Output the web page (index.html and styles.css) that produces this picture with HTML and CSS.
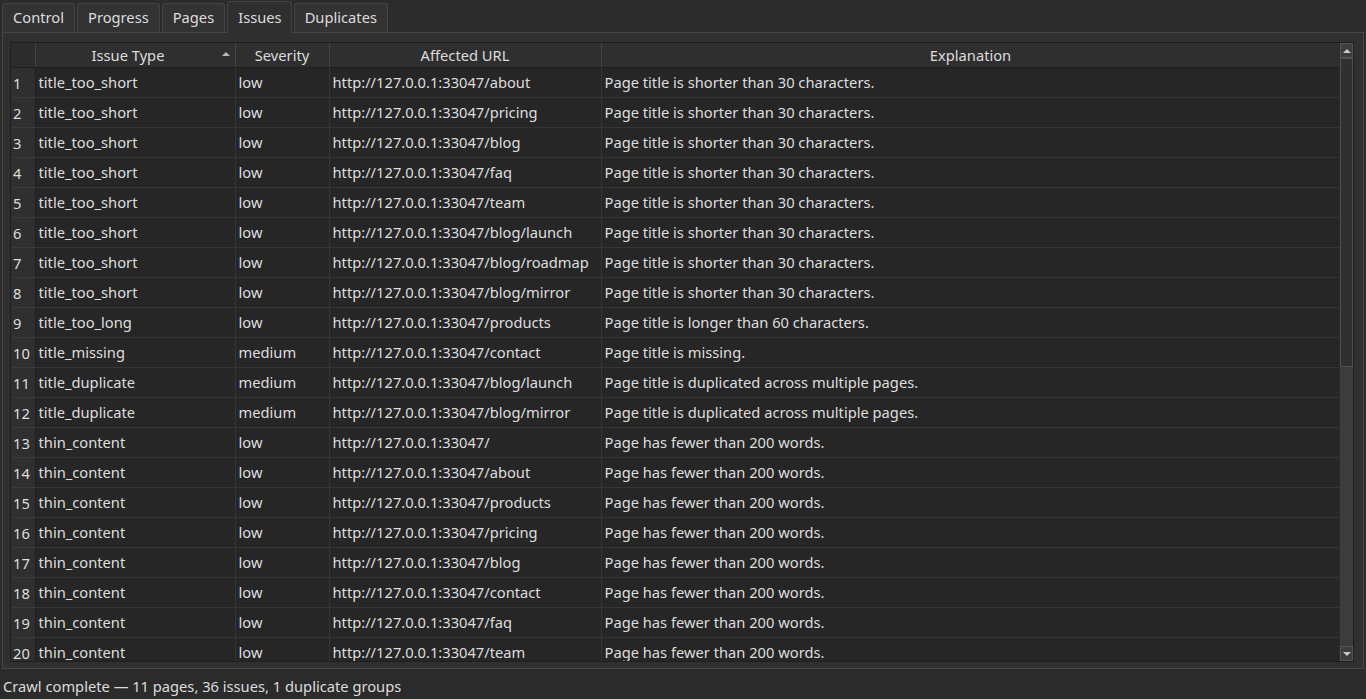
FILE: index.html
```html
<!DOCTYPE html>
<html lang="en">
<head>
  <meta charset="UTF-8">
  <meta name="viewport" content="width=device-width, initial-scale=1.0">
  <link rel="stylesheet" href="styles.css">
</head>
<body>
  <div class="window">
    <!-- Abas -->
    <div class="tabs">
      <div class="tab">Control</div>
      <div class="tab">Progress</div>
      <div class="tab">Pages</div>
      <div class="tab active">Issues</div>
      <div class="tab">Duplicates</div>
    </div>

    <div class="pane">
      <div class="view">
        <div class="table-wrap">
          <table class="grid">
            <colgroup>
              <col class="c-num">
              <col class="c-type">
              <col class="c-sev">
              <col class="c-url">
              <col class="c-exp">
            </colgroup>
            <thead>
              <tr>
                <th class="corner"></th>
                <th class="sorted">Issue Type<span class="sort-arrow"></span></th>
                <th>Severity</th>
                <th>Affected URL</th>
                <th>Explanation</th>
              </tr>
            </thead>
            <tbody>
              <tr><td class="num">1</td><td>title_too_short</td><td>low</td><td>http://127.0.0.1:33047/about</td><td>Page title is shorter than 30 characters.</td></tr>
              <tr><td class="num">2</td><td>title_too_short</td><td>low</td><td>http://127.0.0.1:33047/pricing</td><td>Page title is shorter than 30 characters.</td></tr>
              <tr><td class="num">3</td><td>title_too_short</td><td>low</td><td>http://127.0.0.1:33047/blog</td><td>Page title is shorter than 30 characters.</td></tr>
              <tr><td class="num">4</td><td>title_too_short</td><td>low</td><td>http://127.0.0.1:33047/faq</td><td>Page title is shorter than 30 characters.</td></tr>
              <tr><td class="num">5</td><td>title_too_short</td><td>low</td><td>http://127.0.0.1:33047/team</td><td>Page title is shorter than 30 characters.</td></tr>
              <tr><td class="num">6</td><td>title_too_short</td><td>low</td><td>http://127.0.0.1:33047/blog/launch</td><td>Page title is shorter than 30 characters.</td></tr>
              <tr><td class="num">7</td><td>title_too_short</td><td>low</td><td>http://127.0.0.1:33047/blog/roadmap</td><td>Page title is shorter than 30 characters.</td></tr>
              <tr><td class="num">8</td><td>title_too_short</td><td>low</td><td>http://127.0.0.1:33047/blog/mirror</td><td>Page title is shorter than 30 characters.</td></tr>
              <tr><td class="num">9</td><td>title_too_long</td><td>low</td><td>http://127.0.0.1:33047/products</td><td>Page title is longer than 60 characters.</td></tr>
              <tr><td class="num">10</td><td>title_missing</td><td>medium</td><td>http://127.0.0.1:33047/contact</td><td>Page title is missing.</td></tr>
              <tr><td class="num">11</td><td>title_duplicate</td><td>medium</td><td>http://127.0.0.1:33047/blog/launch</td><td>Page title is duplicated across multiple pages.</td></tr>
              <tr><td class="num">12</td><td>title_duplicate</td><td>medium</td><td>http://127.0.0.1:33047/blog/mirror</td><td>Page title is duplicated across multiple pages.</td></tr>
              <tr><td class="num">13</td><td>thin_content</td><td>low</td><td>http://127.0.0.1:33047/</td><td>Page has fewer than 200 words.</td></tr>
              <tr><td class="num">14</td><td>thin_content</td><td>low</td><td>http://127.0.0.1:33047/about</td><td>Page has fewer than 200 words.</td></tr>
              <tr><td class="num">15</td><td>thin_content</td><td>low</td><td>http://127.0.0.1:33047/products</td><td>Page has fewer than 200 words.</td></tr>
              <tr><td class="num">16</td><td>thin_content</td><td>low</td><td>http://127.0.0.1:33047/pricing</td><td>Page has fewer than 200 words.</td></tr>
              <tr><td class="num">17</td><td>thin_content</td><td>low</td><td>http://127.0.0.1:33047/blog</td><td>Page has fewer than 200 words.</td></tr>
              <tr><td class="num">18</td><td>thin_content</td><td>low</td><td>http://127.0.0.1:33047/contact</td><td>Page has fewer than 200 words.</td></tr>
              <tr><td class="num">19</td><td>thin_content</td><td>low</td><td>http://127.0.0.1:33047/faq</td><td>Page has fewer than 200 words.</td></tr>
              <tr><td class="num">20</td><td>thin_content</td><td>low</td><td>http://127.0.0.1:33047/team</td><td>Page has fewer than 200 words.</td></tr>
            </tbody>
          </table>
        </div>

        <!-- Barra de rolagem -->
        <div class="scrollbar">
          <div class="sb-btn"><span class="tri up"></span></div>
          <div class="sb-track">
            <div class="sb-handle"></div>
          </div>
          <div class="sb-btn"><span class="tri down"></span></div>
        </div>
      </div>
    </div>

    <div class="status">Crawl complete — 11 pages, 36 issues, 1 duplicate groups</div>
  </div>
</body>
</html>
```

FILE: styles.css
```css
/* Reset */
* {
  margin: 0;
  padding: 0;
  box-sizing: border-box;
}

body {
  font-family: 'Noto Sans', 'Open Sans', sans-serif;
  font-size: 14.7px;
  background-color: #2b2b2b;
  color: #dedede;
  width: 1366px;
  height: 699px;
  overflow: hidden;
}

.window {
  display: flex;
  flex-direction: column;
  height: 100%;
}

/* Abas */
.tabs {
  display: flex;
  gap: 2px;
  padding: 0 0 0 2px;
  height: 32px;
  align-items: flex-end;
}

.tab {
  height: 29px;
  padding: 0 10px;
  border: 1px solid #444;
  border-bottom: none;
  border-radius: 3px 3px 0 0;
  background-color: #333;
  line-height: 27px;
  color: #dcdcdc;
}

.tab.active {
  height: 32px;
  line-height: 30px;
  padding: 0 9px 0 10px;
  background-color: #2f2f2f;
  margin-bottom: -1px;
  position: relative;
  z-index: 1;
}

/* Painel */
.pane {
  margin: 0 2px;
  height: 637px;
  border: 1px solid #474747;
  background-color: #303030;
  padding: 9px 9px 6px 7px;
}

.view {
  display: flex;
  height: 620px;
  border: 1px solid #1e1e1e;
  background-color: #262626;
}

.table-wrap {
  flex: 1;
  overflow: hidden;
}

.grid {
  border-collapse: collapse;
  table-layout: fixed;
  width: 1329px;
}

.c-num { width: 24px; }
.c-type { width: 200px; }
.c-sev { width: 94px; }
.c-url { width: 272px; }
.c-exp { width: 739px; }

.grid th {
  height: 24px;
  font-weight: normal;
  background-color: #2f2f2f;
  border-right: 1px solid #444;
  border-bottom: 1px solid #1f1f1f;
  color: #dcdcdc;
  text-align: center;
  position: relative;
}

.grid th.sorted {
  padding-right: 14px;
}

.grid th.corner {
  background-color: #2c2c2c;
}

.sort-arrow {
  position: absolute;
  right: 5px;
  top: 9px;
  width: 0;
  height: 0;
  border-left: 4px solid transparent;
  border-right: 4px solid transparent;
  border-bottom: 4px solid #b8b8b8;
}

.grid td {
  height: 30px;
  padding: 0 3px;
  white-space: nowrap;
  overflow: hidden;
  border-right: 1px solid #353535;
  border-bottom: 1px solid #353535;
}

.grid td.num {
  padding: 2px 0 0 2px;
  background-color: #2f2f2f;
  border-right: 1px solid #1f1f1f;
  border-bottom: 1px solid #3a3a3a;
}

/* Barra de rolagem */
.scrollbar {
  width: 14px;
  display: flex;
  flex-direction: column;
  background-color: #3b3b3b;
  border-left: 1px solid #2a2a2a;
}

.sb-btn {
  height: 15px;
  background-color: #3d3d3d;
  border: 1px solid #555;
  display: flex;
  align-items: center;
  justify-content: center;
}

.sb-track {
  flex: 1;
  background-color: #3c3c3c;
}

.sb-handle {
  height: 309px;
  background-color: #303030;
  border: 1px solid #505050;
}

.tri {
  width: 0;
  height: 0;
  border-left: 4px solid transparent;
  border-right: 4px solid transparent;
}

.tri.up { border-bottom: 4px solid #c8c8c8; }
.tri.down { border-top: 4px solid #c8c8c8; }

/* Status */
.status {
  flex: 1;
  padding: 7px 3px 0;
  color: #dcdcdc;
}
```
